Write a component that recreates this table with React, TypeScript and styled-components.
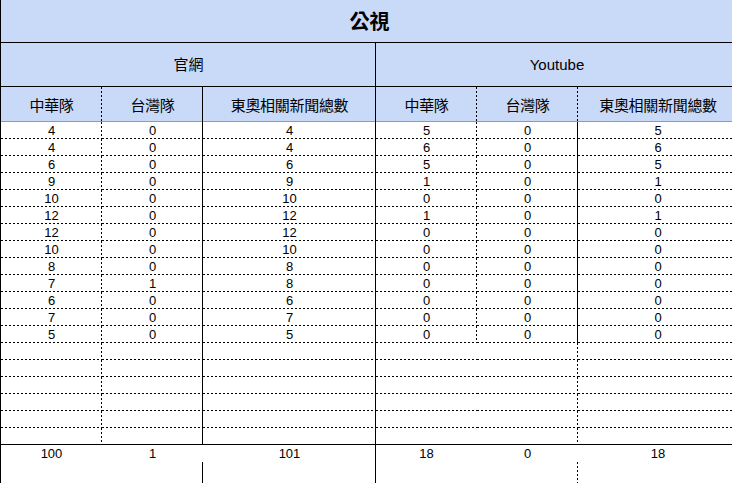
import React from 'react';
import styled, { createGlobalStyle } from 'styled-components';

type Line = 'solid' | 'dash' | 'gray' | 'none';

const GlobalStyle = createGlobalStyle`
  html,
  body {
    margin: 0;
    padding: 0;
    background: #ffffff;
    overflow: hidden;
  }
`;

const lineLayer = (kind: Line, side: 'right' | 'bottom') => {
  if (kind === 'none') return null;
  const color = kind === 'gray' ? '#9a9a9a' : '#000';
  const dir = side === 'right' ? 'to bottom' : 'to right';
  const image =
    kind === 'dash'
      ? `repeating-linear-gradient(${dir}, ${color} 0 2px, transparent 2px 4px)`
      : `linear-gradient(${color}, ${color})`;
  const place = side === 'right' ? 'right top / 1px 100%' : 'left bottom / 100% 1px';
  return `${image} ${place} no-repeat`;
};

const Sheet = styled.div`
  display: grid;
  grid-template-columns: 101px 101px 173px 101px 101px 160px;
  grid-template-rows: 43px 44px 35px repeat(19, 17px) 17px 30px;
  width: max-content;
  border-left: 1px solid #000;
  font-family: 'Liberation Sans', 'Noto Sans CJK TC', Arial, sans-serif;
  color: #000;
`;

const Cell = styled.div<{ $r?: Line; $b?: Line; $span?: number; $head?: boolean }>`
  box-sizing: border-box;
  grid-column: span ${(p) => p.$span ?? 1};
  display: flex;
  align-items: center;
  justify-content: center;
  font-size: 13px;
  line-height: 17px;
  white-space: nowrap;
  overflow: hidden;
  background: ${(p) =>
    [lineLayer(p.$r ?? 'none', 'right'), lineLayer(p.$b ?? 'none', 'bottom'), p.$head ? '#c9daf8' : '#ffffff']
      .filter(Boolean)
      .join(', ')};
`;

const Title = styled(Cell)`
  font-family: 'Noto Sans CJK TC', sans-serif;
  font-size: 20px;
  font-weight: 700;
  padding-bottom: 3px;
`;

const GroupLabel = styled(Cell)`
  font-family: 'Liberation Sans', 'Noto Sans CJK TC', sans-serif;
  font-size: 15px;
  padding-bottom: 1px;
`;

const ColLabel = styled(Cell)`
  font-family: 'Noto Sans CJK TC', sans-serif;
  font-size: 15px;
  letter-spacing: -0.3px;
  padding-bottom: 1px;
`;

const rows: number[][] = [
  [4, 0, 4, 5, 0, 5],
  [4, 0, 4, 6, 0, 6],
  [6, 0, 6, 5, 0, 5],
  [9, 0, 9, 1, 0, 1],
  [10, 0, 10, 0, 0, 0],
  [12, 0, 12, 1, 0, 1],
  [12, 0, 12, 0, 0, 0],
  [10, 0, 10, 0, 0, 0],
  [8, 0, 8, 0, 0, 0],
  [7, 1, 8, 0, 0, 0],
  [6, 0, 6, 0, 0, 0],
  [7, 0, 7, 0, 0, 0],
  [5, 0, 5, 0, 0, 0],
];

const totals = [100, 1, 101, 18, 0, 18];
const labels = ['中華隊', '台灣隊', '東奧相關新聞總數', '中華隊', '台灣隊', '東奧相關新聞總數'];

const headRight: Line[] = ['dash', 'solid', 'solid', 'dash', 'dash', 'none'];
const dataRight: Line[] = ['dash', 'solid', 'solid', 'dash', 'solid', 'none'];
const emptyRight: Line[] = ['dash', 'solid', 'solid', 'none', 'dash', 'none'];
const totalRight: Line[] = ['none', 'none', 'solid', 'none', 'none', 'none'];
const tailRight: Line[] = ['none', 'solid', 'solid', 'none', 'dash', 'none'];

const EMPTY_ROWS = 6;

const App: React.FC = () => {
  return (
    <>
      <GlobalStyle />
      <Sheet>
        <Title $span={6} $b="solid" $head>
          公視
        </Title>

        <GroupLabel $span={3} $r="solid" $b="solid" $head>
          官網
        </GroupLabel>
        <GroupLabel $span={3} $b="solid" $head>
          Youtube
        </GroupLabel>

        {labels.map((label, i) => (
          <ColLabel key={`h${i}`} $r={headRight[i]} $b="gray" $head>
            {label}
          </ColLabel>
        ))}

        {rows.map((row, ri) =>
          row.map((value, ci) => (
            <Cell key={`d${ri}-${ci}`} $r={dataRight[ci]} $b="dash">
              {value}
            </Cell>
          )),
        )}

        {Array.from({ length: EMPTY_ROWS }).map((_, ri) =>
          emptyRight.map((r, ci) => (
            <Cell key={`e${ri}-${ci}`} $r={r} $b={ri === EMPTY_ROWS - 1 ? 'solid' : 'dash'} />
          )),
        )}

        {totals.map((value, ci) => (
          <Cell key={`t${ci}`} $r={totalRight[ci]}>
            {value}
          </Cell>
        ))}

        {tailRight.map((r, ci) => (
          <Cell key={`z${ci}`} $r={r} />
        ))}
      </Sheet>
    </>
  );
};

export default App;
